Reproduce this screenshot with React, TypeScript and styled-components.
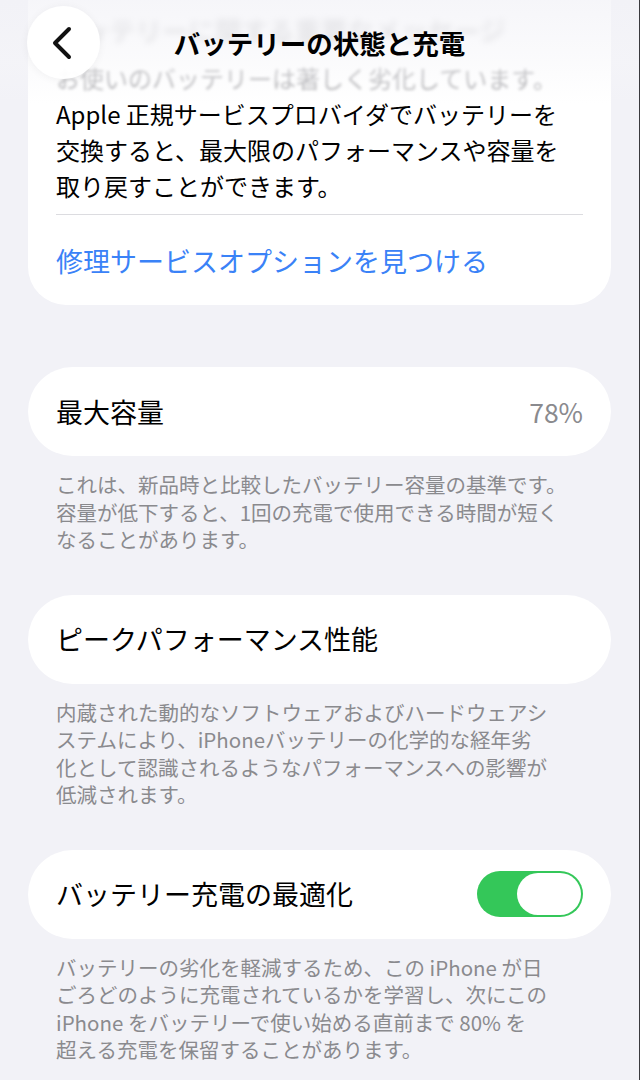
import styled, { createGlobalStyle } from "styled-components";

const GlobalStyle = createGlobalStyle`
  html, body {
    margin: 0;
    padding: 0;
    background: #f2f2f7;
  }

  body {
    font-family: "Noto Sans CJK JP", "Noto Sans", sans-serif;
    color: #000;
  }
`;

const Screen = styled.div`
  position: relative;
  width: 640px;
  height: 1080px;
  overflow: hidden;
  background: #f2f2f7;
  box-sizing: border-box;
  border-right: 1px solid #3a3a3e;
`;

const NavBar = styled.header`
  position: absolute;
  top: 0;
  left: 0;
  right: 0;
  height: 104px;
  display: grid;
  grid-template-columns: 1fr auto 1fr;
  align-items: center;
  align-content: start;
  padding: 6px 27px 0;
  box-sizing: border-box;
  background: linear-gradient(
    to bottom,
    rgba(242, 242, 247, 0.7) 0%,
    rgba(246, 246, 249, 0.45) 60%,
    rgba(255, 255, 255, 0) 100%
  );
  z-index: 2;
`;

const BackButton = styled.button`
  justify-self: start;
  width: 73px;
  height: 73px;
  border: none;
  border-radius: 50%;
  padding: 0;
  display: flex;
  align-items: center;
  justify-content: center;
  background: rgba(255, 255, 255, 0.94);
  box-shadow: 0 1px 8px rgba(0, 0, 0, 0.05);
  cursor: pointer;

  & > svg {
    margin-left: -3px;
  }
`;

const Title = styled.h1`
  margin: 0;
  font-size: 26.5px;
  line-height: 36px;
  font-weight: 700;
  letter-spacing: 0;
  white-space: nowrap;
`;

const Content = styled.main`
  display: flex;
  flex-direction: column;
  padding: 0 28px;
`;

const NoticeCard = styled.section`
  margin-top: -40px;
  padding: 52px 28px 26px;
  background: #fff;
  border-radius: 38px;
`;

const FadedLine = styled.div<{ $blur: number; $alpha: number; $bold?: boolean }>`
  color: #6e6e73;
  opacity: ${({ $alpha }) => $alpha};
  filter: blur(${({ $blur }) => $blur}px);
  font-weight: ${({ $bold }) => ($bold ? 700 : 400)};
  white-space: nowrap;
`;

const CardHeading = styled(FadedLine)`
  font-size: 26.5px;
  line-height: 36px;
  margin-bottom: 12px;
`;

const Body = styled.div`
  font-size: 24px;
  line-height: 36px;
  white-space: nowrap;
`;

const Divider = styled.hr`
  margin: 10px 0 0;
  border: none;
  height: 1px;
  background: #dcdce0;
`;

const LinkRow = styled.a`
  display: block;
  padding-top: 28px;
  font-size: 27px;
  line-height: 36px;
  color: #3a82f7;
  text-decoration: none;
  cursor: pointer;
`;

const Section = styled.section<{ $gap: number }>`
  margin-top: ${({ $gap }) => $gap}px;
`;

const RowCard = styled.div`
  height: 89px;
  padding: 0 28px;
  display: flex;
  align-items: center;
  justify-content: space-between;
  background: #fff;
  border-radius: 45px;
`;

const RowLabel = styled.span`
  font-size: 27px;
  line-height: 36px;
`;

const RowValue = styled.span`
  font-size: 26.5px;
  line-height: 36px;
  color: #8a8a8e;
`;

const Footnote = styled.p`
  margin: 0;
  padding: 15px 28px 0;
  font-size: 20.5px;
  line-height: 27.5px;
  color: #8a8a8e;
  white-space: nowrap;
`;

const Toggle = styled.span<{ $on: boolean }>`
  width: 106px;
  height: 46px;
  padding: 2px;
  box-sizing: border-box;
  border-radius: 23px;
  display: flex;
  justify-content: ${({ $on }) => ($on ? "flex-end" : "flex-start")};
  background: ${({ $on }) => ($on ? "#34c759" : "#e9e9eb")};
`;

const Knob = styled.span`
  width: 64px;
  height: 42px;
  border-radius: 21px;
  background: #fff;
`;

const Chevron = () => (
  <svg width="22" height="34" viewBox="0 0 22 34" fill="none">
    <path
      d="M18 3 L4 17 L18 31"
      stroke="#111"
      strokeWidth="4"
      strokeLinecap="round"
      strokeLinejoin="round"
    />
  </svg>
);

export default function App() {
  return (
    <>
      <GlobalStyle />
      <Screen>
        <NavBar>
          <BackButton aria-label="戻る">
            <Chevron />
          </BackButton>
          <Title>バッテリーの状態と充電</Title>
          <span />
        </NavBar>

        <Content>
          <NoticeCard>
            <CardHeading $blur={3} $alpha={0.3} $bold>
              バッテリーに関する重要なメッセージ
            </CardHeading>
            <Body>
              <FadedLine $blur={1.4} $alpha={0.55}>
                お使いのバッテリーは著しく劣化しています。
              </FadedLine>
              Apple 正規サービスプロバイダでバッテリーを
              <br />
              交換すると、最大限のパフォーマンスや容量を
              <br />
              取り戻すことができます。
            </Body>
            <Divider />
            <LinkRow>修理サービスオプションを見つける</LinkRow>
          </NoticeCard>

          <Section $gap={62}>
            <RowCard>
              <RowLabel>最大容量</RowLabel>
              <RowValue>78%</RowValue>
            </RowCard>
            <Footnote>
              これは、新品時と比較したバッテリー容量の基準です。
              <br />
              容量が低下すると、1回の充電で使用できる時間が短く
              <br />
              なることがあります。
            </Footnote>
          </Section>

          <Section $gap={41}>
            <RowCard>
              <RowLabel>ピークパフォーマンス性能</RowLabel>
            </RowCard>
            <Footnote>
              内蔵された動的なソフトウェアおよびハードウェアシ
              <br />
              ステムにより、iPhoneバッテリーの化学的な経年劣
              <br />
              化として認識されるようなパフォーマンスへの影響が
              <br />
              低減されます。
            </Footnote>
          </Section>

          <Section $gap={41}>
            <RowCard>
              <RowLabel>バッテリー充電の最適化</RowLabel>
              <Toggle $on role="switch" aria-checked="true">
                <Knob />
              </Toggle>
            </RowCard>
            <Footnote>
              バッテリーの劣化を軽減するため、この iPhone が日
              <br />
              ごろどのように充電されているかを学習し、次にこの
              <br />
              iPhone をバッテリーで使い始める直前まで 80% を
              <br />
              超える充電を保留することがあります。
            </Footnote>
          </Section>
        </Content>
      </Screen>
    </>
  );
}
